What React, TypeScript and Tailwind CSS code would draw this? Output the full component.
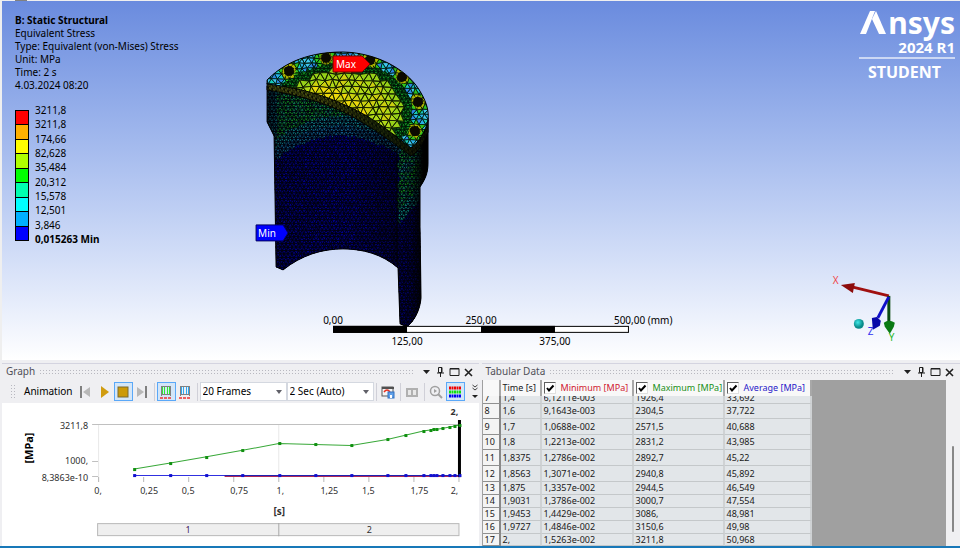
import type { ReactNode } from "react";

type Point = [number, number];

const legend = [
    { value: "3211,8", color: "bg-[#ff0000]" },
    { value: "3211,8", color: "bg-[#ffb000]" },
    { value: "174,66", color: "bg-[#ffff00]" },
    { value: "82,628", color: "bg-[#b0ff00]" },
    { value: "35,484", color: "bg-[#00ff00]" },
    { value: "20,312", color: "bg-[#00ffb0]" },
    { value: "15,578", color: "bg-[#00ffff]" },
    { value: "12,501", color: "bg-[#00b0ff]" },
    { value: "3,846", color: "bg-[#0000ff]" },
];

const rows = [
    { id: 8, time: "1,6", min: "9,1643e-003", max: "2304,5", avg: "37,722", h: "h-[15px]" },
    { id: 9, time: "1,7", min: "1,0688e-002", max: "2571,5", avg: "40,688", h: "h-[16px]" },
    { id: 10, time: "1,8", min: "1,2213e-002", max: "2831,2", avg: "43,985", h: "h-[15px]" },
    { id: 11, time: "1,8375", min: "1,2786e-002", max: "2892,7", avg: "45,22", h: "h-[16px]" },
    { id: 12, time: "1,8563", min: "1,3071e-002", max: "2940,8", avg: "45,892", h: "h-[16px]" },
    { id: 13, time: "1,875", min: "1,3357e-002", max: "2944,5", avg: "46,549", h: "h-[13px]" },
    { id: 14, time: "1,9031", min: "1,3786e-002", max: "3000,7", avg: "47,554", h: "h-[13px]" },
    { id: 15, time: "1,9453", min: "1,4429e-002", max: "3086,", avg: "48,981", h: "h-[13px]" },
    { id: 16, time: "1,9727", min: "1,4846e-002", max: "3150,6", avg: "49,98", h: "h-[13px]" },
    { id: 17, time: "2,", min: "1,5263e-002", max: "3211,8", avg: "50,968", h: "h-[12px]" },
];

const series: Point[] = [
    [0.2, 450], [0.4, 815], [0.6, 1220], [0.8, 1620], [1, 2050], [1.2, 1990], [1.4, 1926],
    [1.6, 2304], [1.7, 2571], [1.8, 2831], [1.8375, 2892], [1.8563, 2940], [1.875, 2944],
    [1.9031, 3000], [1.9453, 3086], [1.9727, 3150], [2, 3211],
];

/* ---------- mesh ---------- */

const bolts: Point[] = [[49, 31], [86, 18], [130, 20], [162, 37], [178, 62], [175, 91]];

const hash = (x: number, y: number) => {
    const v = Math.sin(x * 12.9898 + y * 78.233) * 43758.5453;
    return v - Math.floor(v);
};

// lid disc, seen at an angle: centre (98,76), half axes (71,34) and (55,-54)
const lidPosition = (x: number, y: number) => {
    const dx = x - 98;
    const dy = y - 76;
    const s = (dx * -54 - dy * 55) / -5704;
    const t = (71 * dy - 34 * dx) / -5704;
    return { s, t, r: Math.hypot(s, t) };
};

const lidZone = (x: number, y: number) => {
    const { r } = lidPosition(x, y);
    if (r > 0.82) return "flange";
    return r > 0.71 ? "ring" : "plate";
};

const lidColor = (x: number, y: number) => {
    const { s, t, r } = lidPosition(x, y);
    if (r > 0.82) {
        const near = Math.min(...bolts.map(([bx, by]) => Math.hypot(x - bx, y - by)));
        if (near < 7) return "#a8b400";
        if (near < 10) return "#2fc41c";
        return ["#28b0e8", "#2a86e0", "#18c8b8", "#40c8f0"][Math.floor(hash(x, y) * 4)];
    }
    if (r > 0.71) return hash(x, y) > 0.4 ? "#108c22" : "#0c6c1a";
    if (r > 0.62) return "#96d018";
    if (s < 0.25 && s > -0.5 && t < 0.3) return hash(x, y) > 0.3 ? "#ecd80c" : "#ccd00c";
    return hash(x, y) > 0.3 ? "#b0d818" : "#ccd010";
};

const bodyColor = (x: number, y: number) => {
    if (x >= 158) {
        const edge = 176 - (x - 166) * 1.1;
        if (y > edge) return "#000070";
        if (y > edge - 14) return "#0a8078";
        if (y > edge - 40) return hash(x, y) > 0.5 ? "#109018" : "#0c7850";
        return hash(x, y) > 0.5 ? "#107878" : "#108830";
    }
    const arc = 96 + 22 * ((x - 100) / 62) ** 2;
    if (y > arc) return hash(x, y) > 0.5 ? "#0000a0" : "#000088";
    if (y > arc - 10) return "#106898";
    if (y > arc - 20) return "#108890";
    if (x < 37) return "#0a6474";
    return hash(x, y) > 0.3 ? "#129828" : "#108c5c";
};

// triangles that share a colour are merged into one path
const buildMesh = (
    box: [number, number, number, number],
    cell: number,
    color: (x: number, y: number) => string,
    keep: (x: number, y: number) => boolean,
) => {
    const paths: Record<string, string> = {};
    const [x0, y0, x1, y1] = box;
    const add = (a: Point, b: Point, c: Point) => {
        const cx = (a[0] + b[0] + c[0]) / 3;
        const cy = (a[1] + b[1] + c[1]) / 3;
        if (!keep(cx, cy)) return;
        const key = color(cx, cy);
        paths[key] = (paths[key] || "") + `M${a}L${b}L${c}Z`;
    };
    const node = (i: number, j: number): Point => [
        +(x0 + i * cell + (j % 2) * cell * 0.5 + (hash(i, j) - 0.5) * cell * 0.3).toFixed(1),
        +(y0 + j * cell * 0.85 + (hash(j, i) - 0.5) * cell * 0.25).toFixed(1),
    ];
    for (let j = 0; y0 + j * cell * 0.85 < y1; j++) {
        for (let i = 0; x0 + i * cell < x1; i++) {
            const odd = j % 2;
            add(node(i, j), node(i + 1, j), node(i + odd, j + 1));
            add(node(i + 1 - odd, j), node(i + 1, j + 1), node(i, j + 1));
        }
    }
    return Object.entries(paths);
};

const bodyMesh = buildMesh([24, 44, 192, 290], 4, bodyColor, () => true);
const lidMesh = [
    ...buildMesh([20, 8, 192, 118], 6, lidColor, (x, y) => lidZone(x, y) === "flange"),
    ...buildMesh([20, 8, 192, 118], 4, lidColor, (x, y) => lidZone(x, y) === "ring"),
];
const plateMesh = buildMesh([40, 20, 170, 118], 8, lidColor, (x, y) => lidZone(x, y) === "plate");

const lidPath =
    "M27 40 C40 27 62 12 103 12 C140 13 170 32 181 53 C187 63 189 72 188 80 C186 91 178 103 171 108 C150 92 133 77 105 65 C83 55 60 48 27 44 Z";
const rimPath =
    "M27 43 C60 47 83 54 105 64 C133 76 150 91 171 107 C178 102 186 92 188 80 L188 92 C184 103 178 112 171 116 C150 101 130 85 103 72 C80 61 52 54 27 50 Z";
const bodyPath =
    "M27 46 L27 82 L34 96 L36 227 L43 230 C62 215 82 209 103 209 C122 209 142 214 158 228 L160 284 L167 287 C175 280 180 270 181 258 L180 187 L180 147 C187 137 188 130 188 122 L188 78 Z";

function Model() {
    return (
        <g transform="translate(240 40)">
            <defs>
                <clipPath id="lid"><path d={lidPath} /></clipPath>
                <clipPath id="body"><path d={bodyPath} /></clipPath>
                <linearGradient id="bodyShade" x1="0" x2="1" y1="0" y2="0">
                    <stop offset="0" stopColor="#000" stopOpacity="0.5" />
                    <stop offset="0.1" stopColor="#000" stopOpacity="0.2" />
                    <stop offset="0.5" stopColor="#000" stopOpacity="0.1" />
                    <stop offset="0.8" stopColor="#000" stopOpacity="0.45" />
                    <stop offset="0.83" stopColor="#000" stopOpacity="0.05" />
                    <stop offset="0.9" stopColor="#000" stopOpacity="0.3" />
                    <stop offset="0.97" stopColor="#000" stopOpacity="1" />
                </linearGradient>
                <linearGradient id="rimShade" x1="0" x2="1" y1="0" y2="0">
                    <stop offset="0.3" stopColor="#000" stopOpacity="0.1" />
                    <stop offset="0.7" stopColor="#000c04" stopOpacity="0.6" />
                    <stop offset="1" stopColor="#000" stopOpacity="0.8" />
                </linearGradient>
                <pattern id="rimMesh" width="4" height="5" patternUnits="userSpaceOnUse" patternTransform="skewY(24)">
                    <rect width="4" height="5" fill="#4c5410" />
                    <path d="M0 0L4 5M0 5L4 0M0 0V5" stroke="#000" strokeWidth="0.8" />
                </pattern>
            </defs>
            <g clipPath="url(#body)">
                <path d={bodyPath} fill="#000018" />
                {bodyMesh.map(([color, d]) => (
                    <path key={color} d={d} fill={color} stroke="#000010" strokeWidth="0.8" />
                ))}
                <rect x="27" y="40" width="161" height="250" fill="url(#bodyShade)" />
                <path d="M157 110V288" stroke="#000" />
            </g>
            <path d={bodyPath} fill="none" stroke="#000" strokeWidth="1" />
            <path d={rimPath} fill="url(#rimMesh)" stroke="#000" strokeWidth="1" />
            <path d={rimPath} fill="url(#rimShade)" />
            <g clipPath="url(#lid)">
                <path d={lidPath} fill="#0a3a10" />
                {lidMesh.map(([color, d], i) => (
                    <path key={i} d={d} fill={color} stroke="#001408" strokeWidth="0.8" />
                ))}
                {plateMesh.map(([color, d]) => (
                    <path key={color} d={d} fill={color} stroke="#101800" strokeWidth="0.9" />
                ))}
                {bolts.map(([x, y]) => (
                    <g key={x}>
                        <circle cx={x} cy={y} r="6" fill="none" stroke="#c0c000" strokeWidth="1" strokeDasharray="2 1" />
                        <circle cx={x} cy={y} r="5" fill="#0c0a00" />
                    </g>
                ))}
            </g>
            <path d={lidPath} fill="none" stroke="#000" strokeWidth="1" />
        </g>
    );
}

function ScaleBar() {
    return (
        <g fontSize="10">
            <rect x="333.5" y="326.5" width="295" height="6" fill="#fff" stroke="#000" />
            <rect x="333" y="326" width="74" height="7" />
            <rect x="481" y="326" width="74" height="7" />
            <text x="333" y="324" textAnchor="middle">0,00</text>
            <text x="481" y="324" textAnchor="middle">250,00</text>
            <text x="614" y="324">500,00 (mm)</text>
            <text x="407" y="345" textAnchor="middle">125,00</text>
            <text x="555" y="345" textAnchor="middle">375,00</text>
        </g>
    );
}

function Triad() {
    return (
        <g fontSize="10">
            <defs>
                <radialGradient id="ball" cx="0.4" cy="0.35">
                    <stop offset="0" stopColor="#40e8e8" />
                    <stop offset="1" stopColor="#0a8a8a" />
                </radialGradient>
            </defs>
            <path d="M889 296L852 287" stroke="#a01010" strokeWidth="3" />
            <path d="M841 285L855 283L853 293Z" fill="#8c0c0c" />
            <path d="M889 296V325" stroke="#0c4c10" strokeWidth="3" />
            <path d="M884 323Q889 319 895 323L894 327L890 334L885 327Z" fill="#0a7a14" />
            <path d="M889 297L878 318" stroke="#1010c8" strokeWidth="3" />
            <path d="M872 318L877 317L881 321L880 326L873 330Z" fill="#0808a8" />
            <circle cx="859" cy="324" r="5" fill="url(#ball)" />
            <text x="833" y="284" fill="#f04848">X</text>
            <text x="868" y="335" fill="#3030f0">Z</text>
            <text x="889" y="341" fill="#28b828">Y</text>
        </g>
    );
}

function Scene() {
    return (
        <svg viewBox="2 1 958 359" className="absolute inset-0 h-full w-full" role="img" aria-label="Equivalent stress on the part">
            <Model />
            <path d="M333 56H362L370 64L362 72H333Z" fill="#f00" stroke="#700" />
            <text x="336" y="68" fontSize="10" fill="#fff">Max</text>
            <path d="M256 225H283L288 233L283 241H256Z" fill="#00f" stroke="#000060" />
            <text x="258" y="237" fontSize="10" fill="#fff">Min</text>
            <ScaleBar />
            <Triad />
        </svg>
    );
}

function Brand() {
    return (
        <div className="mr-[5px] w-[96px] text-right font-bold text-white">
            <div className="flex h-[32px] items-center justify-end" aria-label="Ansys">
                <svg viewBox="0 0 28 24" className="h-[24px] w-[28px]">
                    <path d="M0 23L10 0H15L6 23Z" fill="#fff" />
                    <path d="M16 0L26 23H19L12 8Z" fill="#fff" />
                </svg>
                <span className="text-[30px] leading-[32px]">nsys</span>
            </div>
            <p className="text-[15px] leading-[16px]">2024 R1</p>
            <hr className="mt-[2px] mb-[3px] border-t-2 border-white/60" />
            <p className="pr-[14px] text-[16px] leading-[20px]">STUDENT</p>
        </div>
    );
}

function Viewport() {
    return (
        <section className="relative flex flex-1 border-l-2 border-[#efefef] bg-linear-to-b from-[#6a8bde] to-white">
            <Scene />
            <div className="relative flex flex-1 items-start justify-between pt-[6px]">
                <div className="pt-[7px] pl-[13px] text-[10px] leading-[13px]">
                    <h1 className="font-bold">B: Static Structural</h1>
                    <p>Equivalent Stress</p>
                    <p>Type: Equivalent (von-Mises) Stress</p>
                    <p>Unit: MPa</p>
                    <p>Time: 2 s</p>
                    <p>4.03.2024 08:20</p>
                    <div className="mt-[11px] flex gap-[6px]">
                        <div className="mt-[7px] flex h-[131px] w-[14px] flex-col divide-y divide-black border border-black">
                            {legend.map((item, i) => (
                                <div key={i} className={`flex-1 ${item.color}`} />
                            ))}
                        </div>
                        <ul className="leading-[14px]">
                            {legend.map((item, i) => (
                                <li key={i} className={i % 3 === 1 ? "h-[15px]" : "h-[14px]"}>{item.value}</li>
                            ))}
                            <li className="font-bold">0,015263 Min</li>
                        </ul>
                    </div>
                </div>
                <Brand />
            </div>
        </section>
    );
}

function PanelTitle({ title }: { title: string }) {
    return (
        <header className="flex h-[17px] items-center gap-1 border-t border-[#d4d4e0] pr-[6px] pl-1 text-[#505058]">
            <h2 className="text-[10px]">{title}</h2>
            <div className="h-[6px] flex-1 bg-[radial-gradient(circle,#b8b8c0_1px,transparent_1px)] bg-[length:3px_3px]" />
            <div className="ml-1 flex items-center gap-1 text-[#202020]">
                <button type="button" aria-label="Window menu">
                    <svg viewBox="0 0 9 12" className="h-3 w-[9px]"><path d="M1 4H8L4.500 8Z" fill="currentColor" /></svg>
                </button>
                <button type="button" aria-label="Pin">
                    <svg viewBox="0 0 10 12" className="h-3 w-[10px]" fill="none" stroke="currentColor">
                        <path d="M3.500 1.500H7V6.500H3.500ZM6.500 1.500V6.500M2 7H9M5.500 7V11" />
                    </svg>
                </button>
                <button type="button" aria-label="Maximize">
                    <svg viewBox="0 0 11 12" className="h-3 w-[11px]" fill="none" stroke="currentColor">
                        <path d="M1 2.500H10V9.500H1ZM1 3H10" />
                    </svg>
                </button>
                <button type="button" aria-label="Close">
                    <svg viewBox="0 0 9 12" className="h-3 w-[9px]" fill="none" stroke="currentColor" strokeWidth="1.600">
                        <path d="M1 3L8 10M8 3L1 10" />
                    </svg>
                </button>
            </div>
        </header>
    );
}

function ToolButton({ label, active, children }: { label: string; active?: boolean; children: ReactNode }) {
    return (
        <button
            type="button"
            aria-label={label}
            aria-pressed={active}
            className={`flex h-[19px] w-[19px] shrink-0 items-center justify-center border ${
                active ? "border-[#5aa8f8] bg-[#d4e6f8]" : "border-transparent"
            }`}
        >
            <svg viewBox="0 0 14 14" className="h-[14px] w-[14px] shrink-0">{children}</svg>
        </button>
    );
}

function ToolSelect({ label, value }: { label: string; value: string }) {
    return (
        <div className="relative h-[19px] w-[87px] shrink-0 border border-[#d4d8e0] bg-white">
            <select aria-label={label} className="block h-full w-full appearance-none bg-transparent pl-[2px] text-[10px] leading-[17px] outline-none">
                <option>{value}</option>
            </select>
            <svg viewBox="0 0 6 4" className="pointer-events-none absolute top-[7px] right-1 h-1 w-[6px]">
                <path d="M0 0H6L3 4Z" fill="#606068" />
            </svg>
        </div>
    );
}

const Divider = () => <div className="h-[18px] w-px shrink-0 bg-[#d0d0d8]" />;

function Bars({ color }: { color: string }) {
    return (
        <>
            <path d="M2.500 1V11M11.500 1V11M2 1.500H12M2 9.500H12" stroke="#808080" fill="none" />
            <path d="M5.500 2V9M8.500 2V9M3.500 2V9M10.500 2V9" stroke={color} fill="none" />
            <path d="M1 13H13" stroke="#f03030" strokeWidth="1.500" strokeDasharray="3 1" />
        </>
    );
}

function Toolbar() {
    return (
        <div className="flex h-[23px] items-center gap-[2px] overflow-hidden pt-px pl-2">
            <div className="h-[15px] w-[6px] shrink-0 bg-[radial-gradient(circle,#b8b8c0_1px,transparent_1px)] bg-[length:3px_3px]" />
            <span className="mr-px ml-[6px] text-[10px]">Animation</span>
            <div className="flex">
                <ToolButton label="Previous frame">
                    <path d="M2 1H4V13H2Z" fill="#808080" /><path d="M12 2V12L5 7Z" fill="#b8b8b8" />
                </ToolButton>
                <ToolButton label="Play"><path d="M4 1V13L12 7Z" fill="#d09c10" /></ToolButton>
                <ToolButton label="Stop" active>
                    <rect x="2" y="2" width="10" height="10" fill="#cc9a08" stroke="#7a6a30" />
                </ToolButton>
                <ToolButton label="Next frame">
                    <path d="M10 1H12V13H10Z" fill="#808080" /><path d="M2 2V12L9 7Z" fill="#b8b8b8" />
                </ToolButton>
            </div>
            <Divider />
            <div className="flex">
                <ToolButton label="Distributed" active><Bars color="#30e830" /></ToolButton>
                <ToolButton label="Result sets"><Bars color="#30a8f0" /></ToolButton>
            </div>
            <Divider />
            <div className="flex">
                <ToolSelect label="Frames" value="20 Frames" />
                <ToolSelect label="Duration" value="2 Sec (Auto)" />
            </div>
            <Divider />
            <ToolButton label="Export video">
                <rect x="1" y="2" width="11" height="9" fill="#f4f4f4" stroke="#585858" />
                <path d="M1 3H13" stroke="#505050" strokeWidth="2" />
                <path d="M3 7Q6 3 9 7" stroke="#e83020" fill="none" strokeWidth="1.500" />
                <rect x="7" y="7" width="6" height="6" fill="#60a0e8" stroke="#3070c0" />
                <path d="M9 10H11V13H9Z" fill="#fff" />
            </ToolButton>
            <Divider />
            <ToolButton label="Frames view">
                <rect x="1" y="3" width="12" height="9" fill="#b0b0b0" />
                <path d="M3 5H6V10H3ZM8 5H11V10H8Z" fill="#e8e8e8" />
            </ToolButton>
            <Divider />
            <div className="flex">
                <ToolButton label="Zoom to fit">
                    <circle cx="6" cy="6" r="4.500" fill="none" stroke="#a0a0a0" strokeWidth="1.500" />
                    <path d="M5 4V8L8 6Z" fill="#a0a0a0" /><path d="M9 9L13 13" stroke="#a0a0a0" strokeWidth="2" />
                </ToolButton>
                <ToolButton label="Show all colors" active>
                    <path d="M1 3H13" stroke="#f00000" strokeWidth="3" strokeDasharray="2 0.500" />
                    <path d="M1 7H13" stroke="#10e010" strokeWidth="3" strokeDasharray="2 0.500" />
                    <path d="M1 11H13" stroke="#0000f0" strokeWidth="3" strokeDasharray="2 0.500" />
                </ToolButton>
            </div>
            <button type="button" aria-label="More tools" className="ml-1 shrink-0">
                <svg viewBox="0 0 8 16" className="h-4 w-2" fill="none" stroke="#404040">
                    <path d="M1.500 1L4 3L6.500 1M1.500 4L4 6L6.500 4" />
                    <path d="M1 11H7L4 14Z" fill="#202020" stroke="none" />
                </svg>
            </button>
        </div>
    );
}

const px = (t: number) => 98 + t * 180.5;
const py = (v: number) => 73 - (v / 3211.8) * 51;

const ticks = ["0,", "0,25", "0,5", "0,75", "1,", "1,25", "1,5", "1,75", "2,"];

function Chart() {
    const line = series.map(([t, v]) => `${px(t)},${py(v)}`).join(" ");
    return (
        <svg viewBox="2 0 476 143" className="w-full bg-white text-[9px]" fill="#303030" role="img" aria-label="Stress over time">
            <path d="M92 21.500H459M92 58.500H98M92 73.500H98" stroke="#c0c0c0" />
            <path d="M98.500 22V79M278.500 22V73" stroke="#e8e8e8" />
            {ticks.map((tick, i) => (
                <g key={tick}>
                    <path d={`M${Math.round(98 + i * 45)}.500 74V79`} stroke="#b8b8b8" />
                    <text x={i === 8 ? 454 : 98 + i * 45 + (i % 2 ? 6 : i === 4 ? 2 : 0)} y="91" textAnchor="middle">{tick}</text>
                </g>
            ))}
            <text x="88" y="26" textAnchor="end">3211,8</text>
            <text x="88" y="61" textAnchor="end">1000,</text>
            <text x="88" y="78" textAnchor="end">8,3863e-10</text>
            <text transform="translate(33 45) rotate(-90)" textAnchor="middle" fontWeight="bold" fontSize="11" fill="#000">[MPa]</text>
            <text x="279" y="112" textAnchor="middle" fontWeight="bold" fontSize="10">[s]</text>
            <text x="454" y="12" textAnchor="middle" fontWeight="bold">2,</text>
            <path d={`M${px(0.2)} 72.500H459`} stroke="#3030e0" />
            <path d={`M${px(0.7)} 73.500H459`} stroke="#b02858" />
            <path d={`M${px(0.7)} 72.500H459`} stroke="#2020b0" />
            <polyline points={line} fill="none" stroke="#38a838" />
            <path d="M459 17V74" stroke="#000" strokeWidth="3" />
            {series.map(([t, v]) => (
                <g key={t}>
                    <rect x={Math.round(px(t)) - 1} y={Math.round(py(v)) - 1} width="3" height="3" fill="#109010" />
                    <rect x={Math.round(px(t)) - 1} y="71" width="3" height="3" fill="#1010d0" />
                </g>
            ))}
            <rect x="97.500" y="120.500" width="361" height="12" fill="#efefef" stroke="#b8b8b8" />
            <path d="M278.500 120V133" stroke="#a8a8a8" />
            <text x="188" y="130" textAnchor="middle" fill="#402060">1</text>
            <text x="369" y="130" textAnchor="middle">2</text>
        </svg>
    );
}

function HeadCheck({ id, label, color }: { id: string; label: string; color: string }) {
    return (
        <th className="border-r-2 border-[#a8a8a8] p-0 font-normal">
            <div className="flex items-center gap-[5px] pl-[2px]">
                <span className="relative h-[12px] w-[12px]">
                    <input id={id} type="checkbox" defaultChecked className="peer block h-[12px] w-[12px] appearance-none border border-[#e0e0e0] border-t-[#606060] border-l-[#606060] bg-white" />
                    <svg viewBox="0 0 12 12" className="pointer-events-none absolute inset-0 hidden h-3 w-3 peer-checked:block">
                        <path d="M3 6L5 8.500L9.500 3.500" fill="none" stroke="#000" strokeWidth="2" />
                    </svg>
                </span>
                <label htmlFor={id} className={`whitespace-nowrap ${color}`}>{label}</label>
            </div>
        </th>
    );
}

const cell = "border-r-2 border-b border-r-[#cfd2d4] border-b-[#c4c8ca] bg-[#e2e6e9] p-0 pl-[2px]";
const numberCell = "border-r-2 border-b border-r-[#888888] border-b-[#909090] bg-[#f4f4f4] p-0 pl-[2px] text-left font-normal";
const cut = "flex h-[7px] items-end overflow-hidden leading-[11px]";

function DataTable() {
    return (
        <div className="flex flex-1 items-start bg-[#a0a0a0] pl-[1px]">
            <table className="w-[329px] table-fixed border-separate border-spacing-0 text-[9px] leading-[11px] text-[#202020]">
                <colgroup>
                    <col className="w-[18px]" />
                    <col className="w-[41px]" />
                    <col className="w-[92px]" />
                    <col className="w-[91px]" />
                    <col className="w-[87px]" />
                </colgroup>
                <thead>
                    <tr className="h-[16px] bg-[#f8f8f8]">
                        <th className="border-r-2 border-[#a8a8a8] p-0" aria-label="Row" />
                        <th className="border-r-2 border-[#a8a8a8] p-0 pl-[2px] text-left font-normal whitespace-nowrap">Time [s]</th>
                        <HeadCheck id="min" label="Minimum [MPa]" color="text-[#d01830]" />
                        <HeadCheck id="max" label="Maximum [MPa]" color="text-[#189018]" />
                        <HeadCheck id="avg" label="Average [MPa]" color="text-[#2818c8]" />
                    </tr>
                </thead>
                <tbody>
                    <tr>
                        <th className={numberCell}><div className={cut}>7</div></th>
                        <td className={cell}><div className={cut}>1,4</div></td>
                        <td className={cell}><div className={cut}>6,1211e-003</div></td>
                        <td className={cell}><div className={cut}>1926,4</div></td>
                        <td className={cell}><div className={cut}>33,692</div></td>
                    </tr>
                    {rows.map((row) => (
                        <tr key={row.id} className={row.h}>
                            <th className={numberCell}>{row.id}</th>
                            <td className={cell}>{row.time}</td>
                            <td className={cell}>{row.min}</td>
                            <td className={cell}>{row.max}</td>
                            <td className={cell}>{row.avg}</td>
                        </tr>
                    ))}
                </tbody>
            </table>
            <div className="ml-auto flex w-[14px] flex-col items-center self-stretch bg-[#f0f0f2] pt-[66px]">
                <div className="h-[86px] w-[2px] rounded bg-[#888888]" />
            </div>
        </div>
    );
}

export default function App() {
    return (
        <div className="flex min-h-screen flex-col bg-[#efeff2] font-['Noto_Sans','Open_Sans',sans-serif] text-black">
            <div className="h-px bg-[#efefef] pl-[15px]">
                <div className="h-px w-3 bg-[#808080]" />
            </div>
            <Viewport />
            <div className="grid grid-cols-2 gap-[3px] border-b-2 border-[#1878b8] pt-[3px]">
                <section className="ml-[2px] flex min-w-0 flex-col">
                    <PanelTitle title="Graph" />
                    <Toolbar />
                    <Chart />
                </section>
                <section className="flex min-w-0 flex-col">
                    <PanelTitle title="Tabular Data" />
                    <DataTable />
                </section>
            </div>
        </div>
    );
}
